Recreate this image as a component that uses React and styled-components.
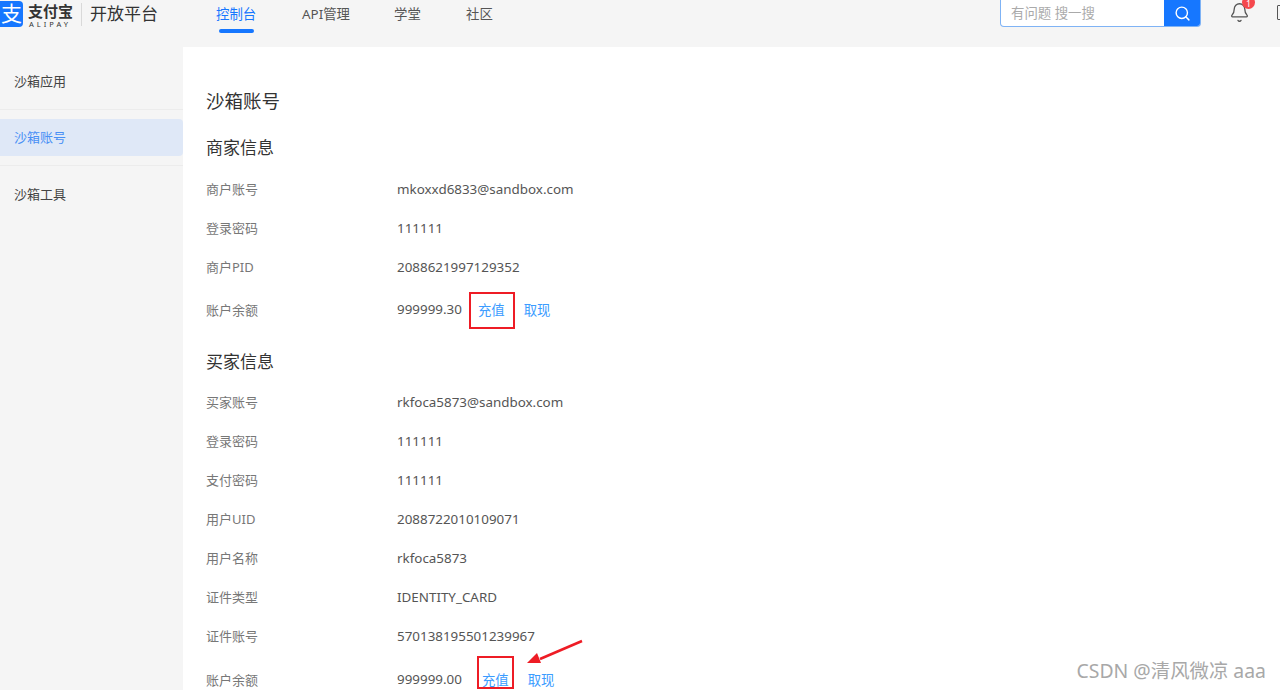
import React from "react";
import styled, { createGlobalStyle } from "styled-components";
import { Bell, Search } from "lucide-react";

const Global = createGlobalStyle`
  html, body {
    margin: 0;
    height: 690px;
    overflow: hidden;
    background: #fff;
    font-family: "Noto Sans", "Noto Sans CJK SC", sans-serif;
  }
`;

const Page = styled.div`
  width: 1280px;
  height: 690px;
  overflow: hidden;
  position: relative;
`;

/* header */
const Header = styled.header`
  height: 47px;
  background: #f5f5f5;
  display: flex;
  align-items: flex-start;
  overflow: hidden;
`;

const Logo = styled.div`
  display: flex;
  align-items: flex-start;
  width: 216px;
  flex: none;
`;

const LogoMark = styled.div`
  width: 23px;
  height: 26px;
  margin-top: 1px;
  background: #1677ff;
  border-radius: 0 4px 4px 0;
  color: #fff;
  font-size: 21px;
  line-height: 25px;
  text-align: center;
`;

const LogoText = styled.div`
  margin: 3px 0 0 5px;
  width: 50px;
  color: #333;
`;

const LogoName = styled.div`
  font-size: 15px;
  line-height: 17px;
  font-weight: 700;
  white-space: nowrap;
`;

const LogoLatin = styled.div`
  margin-left: 1px;
  font-size: 7.5px;
  line-height: 8px;
  letter-spacing: 3px;
  white-space: nowrap;
`;

const LogoDivider = styled.div`
  width: 1px;
  height: 23px;
  margin: 3px 8px 0 3px;
  background: #d9d9d9;
`;

const Product = styled.div`
  font-size: 17px;
  line-height: 28px;
  color: #333;
  white-space: nowrap;
`;

const Nav = styled.nav`
  display: flex;
  flex: 0 0 784px;
`;

const NavItem = styled.a`
  position: relative;
  width: ${(p) => p.$width}px;
  flex: none;
  font-size: 13.4px;
  line-height: 28px;
  color: ${(p) => (p.$active ? "#1677ff" : "#555")};

  ${(p) =>
    p.$active &&
    `&::after {
      content: "";
      position: absolute;
      left: 3px;
      top: 29px;
      width: 35px;
      height: 4px;
      border-radius: 2px;
      background: #1677ff;
    }`}
`;

const SearchBox = styled.div`
  width: 201px;
  height: 27px;
  box-sizing: border-box;
  flex: none;
  display: flex;
  background: #fff;
  border: 1px solid #7fb3f5;
  border-top: none;
  border-radius: 0 0 4px 4px;
  overflow: hidden;
`;

const SearchHint = styled.div`
  flex: 1;
  padding-left: 10px;
  font-size: 13.4px;
  line-height: 26px;
  color: #aaa;
`;

const SearchButton = styled.div`
  width: 36px;
  background: #1677ff;
  color: #fff;
  display: flex;
  align-items: center;
  justify-content: center;
`;

const BellWrap = styled.div`
  position: relative;
  width: 20px;
  height: 20px;
  margin: 2px 0 0 28px;
  color: #555;
  flex: none;
`;

const Badge = styled.span`
  position: absolute;
  left: 13px;
  top: -6px;
  width: 13px;
  height: 13px;
  border-radius: 50%;
  background: #f5484d;
  color: #fff;
  font-size: 9px;
  line-height: 15px;
  text-align: center;
`;

const CutIcon = styled.div`
  width: 12px;
  height: 15px;
  box-sizing: border-box;
  margin: 5px 0 0 28px;
  border: 1.5px solid #555;
  border-radius: 1px;
  flex: none;
`;

/* body */
const Body = styled.div`
  display: flex;
  height: 643px;
`;

const Sidebar = styled.aside`
  width: 183px;
  flex: none;
  background: #f5f5f5;
`;

const SideItem = styled.div`
  height: 37px;
  margin-bottom: ${(p) => p.$gap}px;
  padding-left: 14px;
  font-size: 13px;
  line-height: 37px;
  color: ${(p) => (p.$active ? "#4a90f5" : "#444")};
  background: ${(p) => (p.$active ? "#dfe8f7" : "transparent")};
  border-radius: ${(p) => (p.$active ? "0 4px 4px 0" : "0")};
`;

const SideRule = styled.div`
  height: 1px;
  background: #ececec;
  margin-bottom: ${(p) => p.$gap}px;
`;

const SideList = styled.div`
  padding-top: 16px;
`;

const Main = styled.main`
  flex: 1;
  background: #fff;
  padding: 41px 0 0 23px;
`;

const Title = styled.h1`
  margin: 0 0 21px;
  font-size: 18.5px;
  line-height: 26px;
  font-weight: 400;
  color: #333;
`;

const Section = styled.section`
  margin-bottom: 17px;
`;

const SectionTitle = styled.h2`
  margin: 0;
  height: ${(p) => p.$height}px;
  font-size: 17px;
  line-height: 26px;
  font-weight: 400;
  color: #333;
`;

const Row = styled.div`
  display: flex;
  align-items: center;
  height: ${(p) => p.$height || 39}px;
  font-size: 13.4px;
`;

const Label = styled.div`
  width: 191px;
  flex: none;
  font-size: 13px;
  color: #777;
`;

const Value = styled.div`
  color: #555;
`;

const Link = styled.a`
  position: relative;
  color: #3b9cff;
  margin-left: ${(p) => p.$left}px;

  ${(p) =>
    p.$mark &&
    `&::after {
      content: "";
      position: absolute;
      box-sizing: border-box;
      border: 2px solid #ee1c25;
      ${p.$mark}
    }`}
`;

const Arrow = styled.svg`
  position: absolute;
  left: 520px;
  top: 635px;
`;

const Watermark = styled.div`
  position: absolute;
  right: 14px;
  bottom: 7px;
  font-size: 19.4px;
  line-height: 24px;
  color: #a8a8a8;
`;

const merchant = [
  ["商户账号", "mkoxxd6833@sandbox.com"],
  ["登录密码", "111111"],
  ["商户PID", "2088621997129352"],
];

const buyer = [
  ["买家账号", "rkfoca5873@sandbox.com"],
  ["登录密码", "111111"],
  ["支付密码", "111111"],
  ["用户UID", "2088722010109071"],
  ["用户名称", "rkfoca5873"],
  ["证件类型", "IDENTITY_CARD"],
  ["证件账号", "570138195501239967"],
];

const Rows = ({ items }) =>
  items.map(([label, value]) => (
    <Row key={label}>
      <Label>{label}</Label>
      <Value>{value}</Value>
    </Row>
  ));

export default function App() {
  return (
    <Page>
      <Global />
      <Header>
        <Logo>
          <LogoMark>支</LogoMark>
          <LogoText>
            <LogoName>支付宝</LogoName>
            <LogoLatin>ALIPAY</LogoLatin>
          </LogoText>
          <LogoDivider />
          <Product>开放平台</Product>
        </Logo>
        <Nav>
          <NavItem $width={86} $active>控制台</NavItem>
          <NavItem $width={92}>API管理</NavItem>
          <NavItem $width={72}>学堂</NavItem>
          <NavItem $width={60}>社区</NavItem>
        </Nav>
        <SearchBox>
          <SearchHint>有问题 搜一搜</SearchHint>
          <SearchButton>
            <Search size={17} strokeWidth={2} />
          </SearchButton>
        </SearchBox>
        <BellWrap>
          <Bell size={21} strokeWidth={1.5} />
          <Badge>1</Badge>
        </BellWrap>
        <CutIcon />
      </Header>
      <Body>
        <Sidebar>
          <SideList>
            <SideItem $gap={9}>沙箱应用</SideItem>
            <SideRule $gap={9} />
            <SideItem $active $gap={9}>沙箱账号</SideItem>
            <SideRule $gap={10} />
            <SideItem $gap={0}>沙箱工具</SideItem>
          </SideList>
        </Sidebar>
        <Main>
          <Title>沙箱账号</Title>
          <Section>
            <SectionTitle $height={34}>商家信息</SectionTitle>
            <Rows items={merchant} />
            <Row $height={46}>
              <Label>账户余额</Label>
              <Value>999999.30</Value>
              <Link $left={16} $mark="left: -9px; right: -10px; top: -7px; bottom: -10px;">充值</Link>
              <Link $left={19}>取现</Link>
            </Row>
          </Section>
          <Section>
            <SectionTitle $height={33}>买家信息</SectionTitle>
            <Rows items={buyer} />
            <Row $height={48}>
              <Label>账户余额</Label>
              <Value>999999.00</Value>
              <Link $left={20} $mark="left: -5px; right: -5px; top: -13px; bottom: 0;">充值</Link>
              <Link $left={19}>取现</Link>
            </Row>
          </Section>
        </Main>
      </Body>
      <Arrow width="66" height="34" viewBox="0 0 66 34">
        <path d="M62 6 L20 24" stroke="#ee1c25" strokeWidth="2.5" fill="none" />
        <path d="M7 28 L17 18 L21 28 Z" fill="#ee1c25" />
      </Arrow>
      <Watermark>CSDN @清风微凉 aaa</Watermark>
    </Page>
  );
}
